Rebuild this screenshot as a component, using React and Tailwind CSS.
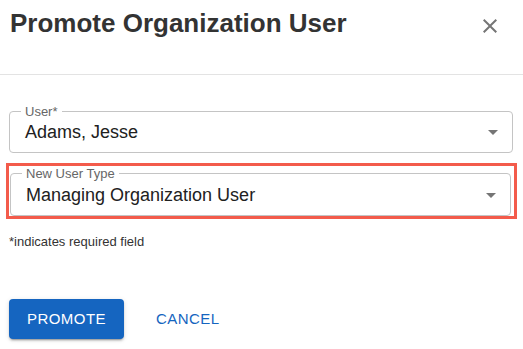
import React from 'react';

const font = { fontFamily: '"Liberation Sans", Arial, Helvetica, sans-serif' };

const SelectField = ({ label, value, height }) => (
  <div className={`relative flex items-center rounded-[4px] border border-[#c4c4c4] bg-white pl-[15px] pr-[7px] ${height}`}>
    <span className="absolute left-[11px] top-[-7px] bg-white px-[4px] text-[13px] leading-[13px] text-[#666666]">
      {label}
    </span>
    <span className="flex-1 text-[18px] leading-[22px] text-[#212121]">{value}</span>
    <svg width="24" height="24" viewBox="0 0 24 24" className="fill-[#757575]">
      <path d="M7 10l5 5 5-5z" />
    </svg>
  </div>
);

const App = () => {
  return (
    <div className="h-[349px] w-[523px] overflow-hidden bg-white" style={font}>
      <div className="flex h-[74px] items-start justify-between pl-[10px] pr-[21px] pt-[7px]">
        <h2 className="text-[26px] font-bold leading-[32px] text-[#333333]">Promote Organization User</h2>
        <svg width="24" height="24" viewBox="0 0 24 24" className="mt-[7px] fill-[#757575]">
          <path d="M19 6.41 17.59 5 12 10.59 6.41 5 5 6.41 10.59 12 5 17.59 6.41 19 12 13.41 17.59 19 19 17.59 13.41 12z" />
        </svg>
      </div>
      <div className="h-px bg-[#e3e3e3]" />

      <div className="pl-[9px] pr-[10px] pt-[36px]">
        <SelectField label="User*" value="Adams, Jesse" height="h-[42px]" />

        <div className="ml-[-3px] mr-[-4px] mt-[10px] border-[3px] border-[#f35b4b] pb-0 pl-[1px] pr-[3px] pt-[7px]">
          <SelectField label="New User Type" value="Managing Organization User" height="h-[43px]" />
        </div>

        <p className="mt-[15px] text-[13px] leading-[16px] text-[#333333]">*indicates required field</p>

        <div className="mt-[49px] flex items-center">
          <button className="h-[40px] w-[115px] rounded-[4px] bg-[#1565c0] text-[15px] uppercase tracking-[0.46px] text-white shadow-[0_3px_1px_-2px_rgba(0,0,0,0.2),0_2px_2px_0_rgba(0,0,0,0.14),0_1px_5px_0_rgba(0,0,0,0.12)]">
            Promote
          </button>
          <button className="ml-[21px] h-[40px] px-[11px] text-[15px] uppercase tracking-[0.46px] text-[#1565c0]">
            Cancel
          </button>
        </div>
      </div>
    </div>
  );
};

export default App;
